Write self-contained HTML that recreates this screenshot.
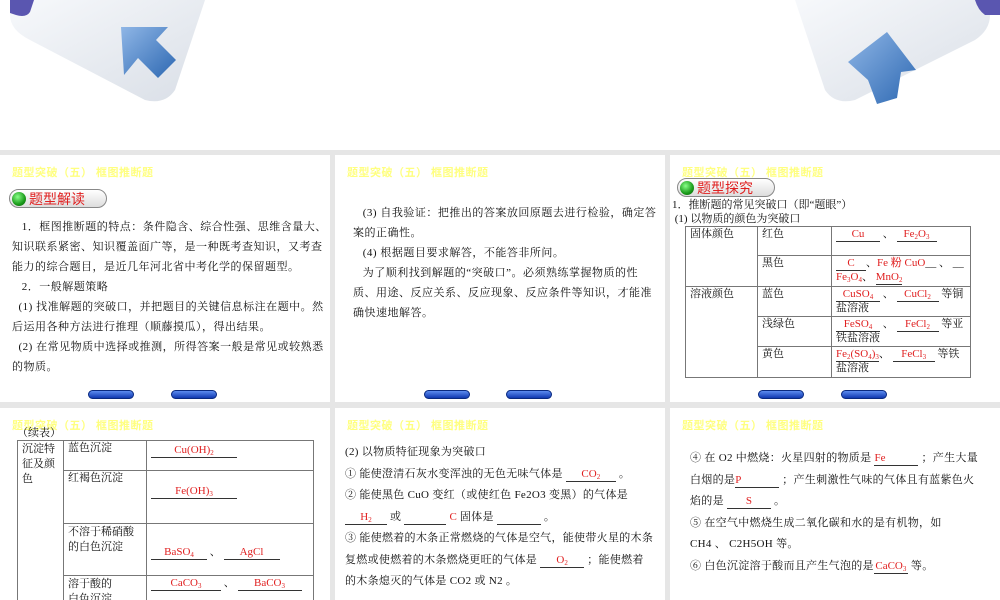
<!DOCTYPE html>
<html><head><meta charset="utf-8"><style>
*{margin:0;padding:0;box-sizing:border-box}
body{width:1000px;height:600px;overflow:hidden;background:#e6e6e6;position:relative;font-family:"Liberation Serif","Noto Serif CJK SC","Noto Sans CJK SC",serif;font-size:11px;color:#111}
.s{position:absolute;background:#fff;overflow:hidden}
.hd{position:absolute;left:12px;top:9px;color:#ffff80;font-weight:bold;font-size:11px;font-family:"Liberation Sans","Noto Sans CJK SC",sans-serif;letter-spacing:0.5px}
.pill{position:absolute;height:19px;width:98px;border:1px solid #888;border-radius:10px;background:linear-gradient(#fff,#ddd);}
.pill b{position:absolute;left:2px;top:2px;width:14px;height:14px;border-radius:50%;background:radial-gradient(circle at 40% 35%,#8f8,#1a9a1a 60%,#0a5a0a)}
.pill span{position:absolute;left:19px;top:0px;color:#e02020;font-size:14px;font-family:"Noto Sans CJK SC",sans-serif;line-height:18px}
.nb{position:absolute;width:46px;height:9px;border-radius:5px;background:linear-gradient(#5c8cf0,#1038b0);border:1px solid #0a2a80}
.t{position:absolute;line-height:20px;white-space:nowrap;letter-spacing:0.5px}
.r{color:#e02020;font-family:"Liberation Serif",serif;letter-spacing:0}
.u{display:inline-block;border-bottom:1px solid #333;text-align:center;line-height:13px}
sub{font-size:7px;line-height:0;vertical-align:-2px}
table{position:absolute;border-collapse:collapse}
td{border:1px solid #777;vertical-align:top;padding:1px 4px;line-height:13px;font-size:11px;white-space:nowrap}
</style></head><body>
<div style="position:absolute;left:0;top:0;width:1000px;height:150px;background:#fff"></div>
<svg style="position:absolute;left:0;top:0" width="1000" height="150">
<defs><linearGradient id="g1" x1="0" y1="0" x2="1" y2="1"><stop offset="0" stop-color="#f6f8fb"/><stop offset="1" stop-color="#d5dbe4"/></linearGradient>
<linearGradient id="ar" x1="0" y1="0" x2="1" y2="1"><stop offset="0" stop-color="#8fb6e6"/><stop offset="1" stop-color="#2d68b2"/></linearGradient></defs>
<path d="M10 0 L205 0 L175 90 Q165 105 145 100 L30 40 Q10 30 10 15 Z" fill="url(#g1)" opacity="0.9"/>
<path d="M10 0 L34 0 L30 12 Q26 18 16 15 L10 13Z" fill="#5a56b0"/>
<path d="M121 27 L168 27 L156 40 L176 60 L158 78 L138 58 L124 75 Z" fill="url(#ar)"/>
<path d="M990 0 L795 0 L825 90 Q835 105 855 100 L975 40 Q990 30 990 15 Z" fill="url(#g1)" opacity="0.9"/>
<path d="M975 0 L1000 0 L1000 15 L985 15 Q978 10 975 0Z" fill="#5a56b0"/>
<path d="M887 32 L916 70 L901 72 L897 98 L877 104 L868 80 L848 62 Z" fill="url(#ar)"/>
</svg>

<!-- slide 1 -->
<div class="s" style="left:0;top:155px;width:330px;height:247px">
<div class="hd">题型突破（五） 框图推断题</div>
<div class="pill" style="left:9px;top:34px"><b></b><span>题型解读</span></div>
<div class="t" style="left:12px;top:62px">
&nbsp;&nbsp;&nbsp;1．框图推断题的特点：条件隐含、综合性强、思维含量大、<br>
知识联系紧密、知识覆盖面广等，是一种既考查知识，又考查<br>
能力的综合题目，是近几年河北省中考化学的保留题型。<br>
&nbsp;&nbsp;&nbsp;2．一般解题策略<br>
&nbsp;&nbsp;(1) 找准解题的突破口，并把题目的关键信息标注在题中。然<br>
后运用各种方法进行推理（顺藤摸瓜），得出结果。<br>
&nbsp;&nbsp;(2) 在常见物质中选择或推测，所得答案一般是常见或较熟悉<br>
的物质。</div>
<div class="nb" style="left:88px;top:235px"></div><div class="nb" style="left:171px;top:235px"></div>
</div>

<!-- slide 2 -->
<div class="s" style="left:335px;top:155px;width:330px;height:247px">
<div class="hd">题型突破（五） 框图推断题</div>
<div class="t" style="left:18px;top:48px">
&nbsp;&nbsp;&nbsp;(3) 自我验证：把推出的答案放回原题去进行检验，确定答<br>
案的正确性。<br>
&nbsp;&nbsp;&nbsp;(4) 根据题目要求解答，不能答非所问。<br>
&nbsp;&nbsp;&nbsp;为了顺利找到解题的“突破口”。必须熟练掌握物质的性<br>
质、用途、反应关系、反应现象、反应条件等知识，才能准<br>
确快速地解答。</div>
<div class="nb" style="left:89px;top:235px"></div><div class="nb" style="left:171px;top:235px"></div>
</div>

<!-- slide 3 -->
<div class="s" style="left:670px;top:155px;width:330px;height:247px">
<div class="hd">题型突破（五） 框图推断题</div>
<div class="pill" style="left:7px;top:23px"><b></b><span>题型探究</span></div>
<div style="position:absolute;left:2px;top:43px;line-height:14px">1．推断题的常见突破口（即“题眼”）<br>&nbsp;(1) 以物质的颜色为突破口</div>
<table style="left:15px;top:71px;width:286px">
<tr style="height:29px"><td rowspan="2" style="width:72px">固体颜色</td><td style="width:74px">红色</td><td><span class="u r" style="width:44px">Cu</span> 、 <span class="u r" style="width:40px">Fe<sub>2</sub>O<sub>3</sub></span></td></tr>
<tr style="height:30px"><td>黑色</td><td><span class="u r" style="width:30px">C</span>、<span class="r">Fe 粉 CuO</span>__ 、 __<br><span class="r">Fe<sub>3</sub>O<sub>4</sub></span>、 <span class="u r" style="width:26px">MnO<sub>2</sub></span></td></tr>
<tr style="height:29px"><td rowspan="3">溶液颜色</td><td>蓝色</td><td><span class="u r" style="width:44px">CuSO<sub>4</sub></span> 、 <span class="u r" style="width:42px">CuCl<sub>2</sub></span> 等铜<br>盐溶液</td></tr>
<tr style="height:30px"><td>浅绿色</td><td><span class="u r" style="width:44px">FeSO<sub>4</sub></span> 、 <span class="u r" style="width:42px">FeCl<sub>2</sub></span> 等亚<br>铁盐溶液</td></tr>
<tr style="height:31px"><td>黄色</td><td><span class="u r">Fe<sub>2</sub>(SO<sub>4</sub>)<sub>3</sub></span>、 <span class="u r" style="width:42px">FeCl<sub>3</sub></span> 等铁<br>盐溶液</td></tr>
</table>
<div class="nb" style="left:88px;top:235px"></div><div class="nb" style="left:171px;top:235px"></div>
</div>

<!-- slide 4 -->
<div class="s" style="left:0;top:408px;width:330px;height:192px">
<div class="hd">题型突破（五） 框图推断题</div>
<div style="position:absolute;left:17px;top:19px;line-height:12px">（续表）</div>
<table style="left:17px;top:32px;width:297px">
<tr style="height:30px"><td rowspan="4" style="width:46px;white-space:normal;line-height:15px">沉淀特征及颜色</td><td style="width:83px">蓝色沉淀</td><td><span class="u r" style="width:86px;margin-top:2px">Cu(OH)<sub>2</sub></span></td></tr>
<tr style="height:53px"><td>红褐色沉淀</td><td style="padding-top:14px"><span class="u r" style="width:86px">Fe(OH)<sub>3</sub></span></td></tr>
<tr style="height:52px"><td style="line-height:15px">不溶于稀硝酸<br>的白色沉淀</td><td style="padding-top:22px"><span class="u r" style="width:56px">BaSO<sub>4</sub></span> 、 <span class="u r" style="width:56px">AgCl</span></td></tr>
<tr style="height:30px"><td style="line-height:15px">溶于酸的<br>白色沉淀</td><td><span class="u r" style="width:70px">CaCO<sub>3</sub></span> 、 <span class="u r" style="width:64px">BaCO<sub>3</sub></span></td></tr>
</table>
</div>

<!-- slide 5 -->
<div class="s" style="left:335px;top:408px;width:330px;height:192px">
<div class="hd">题型突破（五） 框图推断题</div>
<div class="t" style="left:10px;top:34px;line-height:21.5px;letter-spacing:0.3px">
(2) 以物质特征现象为突破口<br>
① 能使澄清石灰水变浑浊的无色无味气体是 <span class="u r" style="width:50px">CO<sub>2</sub></span> 。<br>
② 能使黑色 CuO 变红（或使红色 Fe2O3 变黑）的气体是<br>
<span class="u r" style="width:42px">H<sub>2</sub></span> 或 <span class="u" style="width:42px">&nbsp;</span> <span class="r">C</span> 固体是 <span class="u" style="width:44px">&nbsp;</span> 。<br>
③ 能使燃着的木条正常燃烧的气体是空气，能使带火星的木条<br>复燃或使燃着的木条燃烧更旺的气体是 <span class="u r" style="width:44px">O<sub>2</sub></span> ；能使燃着<br>的木条熄灭的气体是 CO2 或 N2 。</div>
</div>

<!-- slide 6 -->
<div class="s" style="left:670px;top:408px;width:330px;height:192px">
<div class="hd">题型突破（五） 框图推断题</div>
<div class="t" style="left:20px;top:40px;line-height:21.5px;letter-spacing:0.3px">
④ 在 O2 中燃烧：火星四射的物质是 <span class="u r" style="width:44px;text-align:left">Fe</span> ；产生大量<br>白烟的是<span class="u r" style="width:44px;text-align:left">P</span> ；产生刺激性气味的气体且有蓝紫色火<br>焰的是 <span class="u r" style="width:44px">S</span> 。<br>
⑤ 在空气中燃烧生成二氧化碳和水的是有机物，如<br>
CH4 、 C2H5OH 等。<br>
⑥ 白色沉淀溶于酸而且产生气泡的是<span class="u r" style="width:34px">CaCO<sub>3</sub></span> 等。</div>
</div>
</body></html>
